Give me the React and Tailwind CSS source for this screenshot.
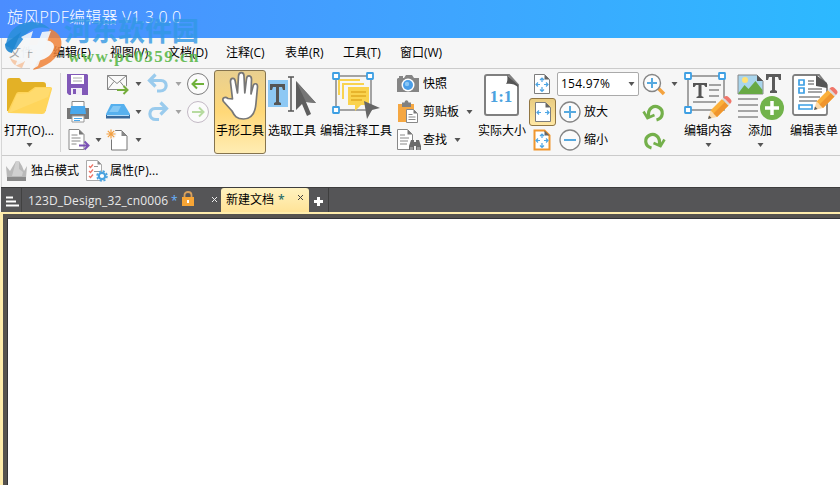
function Caret({ className = '', light = false }) {
  return (
    <svg width="7" height="4" viewBox="0 0 7 4" className={`shrink-0 ${className}`}>
      <path d="M0.5 0h6L3.5 4z" fill={light ? '#a3a3a3' : '#555555'} />
    </svg>
  );
}

function Icon({ children, className = '' }) {
  return (
    <svg width="24" height="24" viewBox="0 0 24 24" fill="none" className={`shrink-0 ${className}`}>
      {children}
    </svg>
  );
}

function BigIcon({ children, width = 52 }) {
  return (
    <svg width={width} height="51" viewBox={`0 0 ${width} 51`} fill="none" className="shrink-0">
      {children}
    </svg>
  );
}

// Shared pieces of the ribbon drawings
function Pencil({ x, y }) {
  return (
    <g transform={`translate(${x} ${y})`}>
      <path d="M0 23 2.5 14.500 9 21z" fill="#fbd9a8" />
      <path d="M0 23 1 19.500 3.500 22z" fill="#555" />
      <path d="M2.500 14.500 14 3l6.500 6.500L9 21z" fill="#fbb03b" />
      <path d="M5.500 17.500 17 6l3.500 3.500L9 21z" fill="#f0952d" />
      <path d="m14 3 1.500-1.500L22 8l-1.500 1.500z" fill="#d9d9d9" />
      <path d="M15.500 1.500C17.500-.5 19-.5 20.500 1l2 2c1.500 1.500 1.500 3-.5 5z" fill="#f0766a" />
    </g>
  );
}

function Handle({ x, y }) {
  return <rect x={x} y={y} width="6" height="6" rx="0.5" fill="#fff" stroke="#3d9fe3" strokeWidth="1.8" />;
}

function PageFit({ all = false, orange = false }) {
  return (
    <>
      <path
        d="M4.500 2.500h10l5 5v14h-15z"
        fill="#fff"
        stroke={orange ? '#f0962e' : '#7d7d7d'}
        strokeWidth={orange ? 2 : 1}
      />
      <path d="M14.500 2.500v5h5z" fill="#666" />
      <path d="M6 12.500h4M14 12.500h4M8 10.500l-2 2 2 2M16 10.500l2 2-2 2" stroke="#4da5e4" strokeWidth="1.200" />
      {all && (
        <path d="M12 6v4M12 15v4M10 8l2-2 2 2M10 17.500l2 2 2-2" stroke="#4da5e4" strokeWidth="1.200" />
      )}
    </>
  );
}

function Divider() {
  return <div className="mt-[3px] h-[79px] w-px bg-[#d3d3d3]" />;
}

function BigButton({ label, caret, width, children }) {
  return (
    <div className={`flex h-[84px] shrink-0 flex-col items-center ${width}`}>
      {children}
      <span className="h-[19px] text-xs leading-[19px] whitespace-nowrap">{label}</span>
      {caret && <Caret className="mt-[3px]" />}
    </div>
  );
}

function Row({ children, className = '' }) {
  return <div className={`flex h-7 items-center whitespace-nowrap ${className}`}>{children}</div>;
}

const menus = [
  { label: '文件', width: 'w-[44px]', color: 'text-[#a4a4a4]' },
  { label: '编辑(E)', width: 'w-[57px]' },
  { label: '视图(V)', width: 'w-[58px]' },
  { label: '文档(D)', width: 'w-[58px]' },
  { label: '注释(C)', width: 'w-[59px]' },
  { label: '表单(R)', width: 'w-[58px]' },
  { label: '工具(T)', width: 'w-[57px]' },
  { label: '窗口(W)', width: 'w-[60px]' },
];

function FileTools() {
  return (
    <>
      <div className="w-[42px]">
        <Row className="pl-[5px]">
          <Icon>
            <path d="M1 2h20l1 1v20H3l-2-2z" fill="#8159b8" />
            <path d="M5 3h13v9H5z" fill="#fff" />
            <path d="M7 6h9M7 9h9" stroke="#aaa" />
            <path d="M5 16h11v7H5z" fill="#f2eef7" />
            <path d="M7 17h3v5H7z" fill="#8159b8" />
          </Icon>
        </Row>
        <Row className="pl-[5px]">
          <Icon>
            <path d="M6 1.500h12v6H6z" fill="#fff" stroke="#888" />
            <path d="M1 8h22v11H1z" fill="#777" />
            <path d="M5 6h14l1 8H4z" fill="#4aa8ec" />
            <path d="M6 16h12v6H6z" fill="#fff" stroke="#999" />
            <path d="M8 18.500h8M8 20.500h6" stroke="#4aa8ec" />
          </Icon>
        </Row>
        <Row className="pl-[5px]">
          <Icon>
            <path d="M3 1.500h10l5 5v15H3z" fill="#fff" stroke="#888" />
            <path d="M13 1.500v5h5z" fill="#777" />
            <path d="M5.500 7h6M5.500 10h9M5.500 13h9M5.500 16h5" stroke="#888" />
            <path d="M13 17.500h9M18.500 13.500l4 4-4 4" stroke="#7b52b5" strokeWidth="2" />
          </Icon>
          <Caret className="ml-[5px]" />
        </Row>
      </div>
      <div className="w-[41px]">
        <Row className="pl-[3px]">
          <Icon>
            <path d="M1.500 3.500h19v14h-19z" fill="#fafafa" stroke="#858585" />
            <path d="m1.500 3.500 9.500 8 9.500-8M1.500 17.500 8 9.500M20.500 17.500 14 9.500" stroke="#858585" />
            <path d="M11 18h10M17.500 14l4 4-4 4" stroke="#f6f6f6" strokeWidth="4" />
            <path d="M11 18h10M17.500 14l4 4-4 4" stroke="#74ad3c" strokeWidth="2" />
          </Icon>
          <Caret className="ml-[5px]" />
        </Row>
        <Row className="pl-[3px]">
          <Icon>
            <path d="M5 4h13l6 10v2H0v-2z" fill="#56b0ee" />
            <path d="M7 6h8l-3 6H3z" fill="#84c8f5" />
            <path d="M0 15h24v3.500H0z" fill="#37699c" />
            <path d="M1 15h22v1H1z" fill="#b7ddf7" />
          </Icon>
          <Caret className="ml-[5px]" />
        </Row>
        <Row className="pl-[3px]">
          <Icon>
            <path d="M5.500 2.500h10l5.500 5.500v14H5.500z" fill="#fff" stroke="#777" />
            <path d="M15.500 2.500V8H21z" fill="#888" />
            <circle cx="5" cy="6" r="5.500" fill="#f6f6f6" />
            <path d="M5 1.500v9M.5 6h9M1.800 2.800l6.400 6.400M8.200 2.800 1.800 9.200" stroke="#f3a041" strokeWidth="1.200" />
          </Icon>
          <Caret className="ml-[5px]" />
        </Row>
      </div>
      <div className="w-[40px]">
        <Row className="pl-[2px]">
          <Icon>
            <path d="M3 8.500h12c7 0 7 10.500-1 10.500h-3M9.500 2.500l-6 6 6 6" stroke="#9acbed" strokeWidth="3.200" />
          </Icon>
          <Caret className="ml-[5px]" light />
        </Row>
        <Row className="pl-[2px]">
          <Icon>
            <path d="M20 8.500H9c-7 0-7 11 1 11h3M14.500 2.500l6 6-6 6" stroke="#9acbed" strokeWidth="3.200" />
          </Icon>
          <Caret className="ml-[5px]" light />
        </Row>
      </div>
      <div className="w-[29px]">
        <Row className="pl-[2px]">
          <Icon>
            <circle cx="12" cy="12" r="10.500" fill="#fbfbfb" stroke="#7c7c7c" />
            <path d="M6.500 12H18M11 7.500 6.500 12l4.500 4.500" stroke="#6fb13a" strokeWidth="2" />
          </Icon>
        </Row>
        <Row className="pl-[2px]">
          <Icon>
            <circle cx="12" cy="12" r="10.500" fill="#fbfbfb" stroke="#c3b9c5" />
            <path d="M6 12h11.500M13 7.500l4.500 4.500-4.500 4.500" stroke="#b7dba0" strokeWidth="2" />
          </Icon>
        </Row>
      </div>
    </>
  );
}

function ClipTools() {
  return (
    <div className="w-[82px] text-xs">
      <Row className="gap-[2px] pl-[3px]">
        <Icon>
          <path d="M1 6h6l2-3h6l2 3h5v14H0V7z" fill="#858585" />
          <path d="M2 4h4v2H2z" fill="#858585" />
          <circle cx="11" cy="13" r="6.500" fill="#fff" />
          <circle cx="11" cy="13" r="5" fill="#4a9ee8" />
          <circle cx="10" cy="12" r="2.200" fill="#8bc7f5" />
        </Icon>
        <span>快照</span>
      </Row>
      <Row className="gap-[2px] pl-[3px]">
        <Icon>
          <path d="M1 4h16v18H1z" fill="#f5a742" />
          <path d="M5 2.500h2.500c.5-3 3.500-3 4 0H14V7H5z" fill="#808080" />
          <path d="M9.500 9.500h7l4 4v9h-11z" fill="#fff" stroke="#888" />
          <path d="M16.500 9.500v4h4z" fill="#777" />
          <path d="M11.500 14.500h4M11.500 17h7M11.500 19.500h7" stroke="#888" />
        </Icon>
        <span>剪贴板</span>
        <Caret className="ml-[5px]" />
      </Row>
      <Row className="gap-[2px] pl-[3px]">
        <Icon>
          <path d="M.5 1.500h10l5 5v15H.5z" fill="#fff" stroke="#888" />
          <path d="M10.500 1.500v5h5z" fill="#777" />
          <path d="M3 7h5M3 10h9M3 13h8M3 16h7" stroke="#888" />
          <path d="M14 12h3v2h2v-2h3l2 6v4h-5v-4h-2v4h-5v-4z" fill="#6b6b6b" />
          <path d="M13 19h3v3h-3zM20 19h3v3h-3z" fill="#989898" />
        </Icon>
        <span>查找</span>
        <Caret className="ml-[5px]" />
      </Row>
    </div>
  );
}

function ZoomTools() {
  return (
    <>
      <div className="w-[28px]">
        <Row className="pl-px">
          <Icon>
            <PageFit all />
          </Icon>
        </Row>
        <div className="flex h-7 w-[27px] items-center justify-center rounded-[3px] border border-[#917643] bg-gradient-to-b from-[#e9cc80] to-[#ffe8a5]">
          <Icon>
            <PageFit />
          </Icon>
        </div>
        <Row className="pl-px">
          <Icon>
            <PageFit all orange />
          </Icon>
        </Row>
      </div>
      <div className="w-[84px] text-xs">
        <div className="flex h-7 items-center">
          <div className="flex h-[24px] w-[82px] items-center justify-between rounded-[2px] border border-[#aaa] bg-white pr-[3px] pl-[3px]">
            <span className="tracking-[0.25px]">154.97%</span>
            <Caret />
          </div>
        </div>
        <Row className="gap-[2px] pl-px">
          <Icon>
            <circle cx="12" cy="12" r="10" fill="#fbfbfb" stroke="#858585" strokeWidth="1.300" />
            <path d="M6 12h12M12 6v12" stroke="#56a9df" strokeWidth="2" />
          </Icon>
          <span>放大</span>
        </Row>
        <Row className="gap-[2px] pl-px">
          <Icon>
            <circle cx="12" cy="12" r="10" fill="#fbfbfb" stroke="#858585" strokeWidth="1.300" />
            <path d="M6 12h12" stroke="#56a9df" strokeWidth="2" />
          </Icon>
          <span>缩小</span>
        </Row>
      </div>
      <div className="w-[41px]">
        <Row className="pl-px">
          <Icon>
            <path d="m16 16 6 6" stroke="#f4a340" strokeWidth="3.500" />
            <circle cx="10" cy="11" r="8.500" fill="#fcfcfc" stroke="#858585" strokeWidth="1.400" />
            <path d="M5 11h10M10 6v10" stroke="#56a9df" strokeWidth="2" />
          </Icon>
          <Caret className="ml-[5px]" />
        </Row>
        <Row className="pl-px">
          <Icon>
            <path d="M14.500 20c7.500-2 7-10 2.500-12.500S5.500 7 6.500 17" stroke="#74b04b" strokeWidth="3.200" />
            <path d="M1.500 11.500 5.500 18l7-3" stroke="#74b04b" strokeWidth="2.600" />
          </Icon>
        </Row>
        <Row className="pl-px">
          <Icon>
            <path d="M9.500 20C2 18 2.500 10 7 7.500S18.500 7 17.500 17" stroke="#74b04b" strokeWidth="3.200" />
            <path d="M22.500 11.500 18.500 18l-7-3" stroke="#74b04b" strokeWidth="2.600" />
          </Icon>
        </Row>
      </div>
    </>
  );
}

function Ribbon() {
  return (
    <div className="flex h-[87px] shrink-0 border-b border-[#cbcbcb] pt-px">
      <BigButton label="打开(O)..." caret width="w-[58px] pr-1">
        <BigIcon>
          <path d="M4 11c0-2 1-3 3-3h9c2 0 2 4 4 4h20c2 0 3 1 3 3v26H4z" fill="#e3b126" />
          <path d="M6 43c-1 0-1.500-1-1-2l8-17c1-2 2-2 4-2h8l7-5h15c2 0 2 1 2 2l-6 21c-1 3-2 4-4 4z" fill="#ffd55b" />
          <path d="M6 43 14 24l12-1 7-5h15l-3 9z" fill="#ffe07c" opacity="0.6" />
        </BigIcon>
      </BigButton>
      <Divider />
      <FileTools />

      {/* selected tool */}
      <div className="ml-px h-[84px] w-[52px] rounded-[3px] border border-[#85744f] bg-gradient-to-b from-[#e8cf8f] via-[#ffd878] to-[#ffedb3]">
        <div className="-mt-px -ml-px">
          <BigButton label="手形工具" width="w-[52px]">
            <BigIcon>
              <path
                d="M18.500 29 16.500 12c-.3-4.500 4.300-5 4.800-.5L23.500 23 24.500 6c.3-4.500 5.500-4.500 5.500 0l.8 17L32.500 9c.5-4.500 5.100-4 5 .5L37 24l2-7.500c.8-4 4.700-3.500 4.500.5L42 33c-.8 11-5 16-12.500 16-7 0-9-3-11.500-8L9.500 31.500c-2-3.500 1.500-5.500 4.500-3z"
                fill="#fff"
                stroke="#777"
                strokeWidth="1.700"
                strokeLinejoin="round"
              />
            </BigIcon>
          </BigButton>
        </div>
      </div>
      <BigButton label="选取工具" width="w-[52px]">
        <BigIcon>
          <path d="M2 10h20v27H2z" fill="#8dc8f4" />
          <path d="M4 14h15v6h-2l-1-3h-3v15l2 1v2H8v-2l2-1V17H7l-1 3H4z" fill="#555" />
          <path d="M22 7h6M22 41h6M25 7v34" stroke="#555" strokeWidth="1.500" />
          <path d="m30 11 20 22-10-1 5 12-4 2-5-12-6 6z" fill="#5e5e5e" />
          <path d="m30 11 20 22-10-1z" fill="#767676" />
        </BigIcon>
      </BigButton>
      <BigButton label="编辑注释工具" width="w-[76px]">
        <BigIcon>
          <path d="M6 6h35v34H6z" stroke="#888" strokeWidth="1.500" />
          <path d="M9 25V10h21M13 29V14h21" stroke="#f9d34f" strokeWidth="2" />
          <path d="M18 17h21v18h-8l-6 6v-6h-7z" fill="#fad34e" />
          <path d="M21 22h15M21 26h15M21 30h11" stroke="#e1aa22" strokeWidth="1.500" />
          <Handle x="3" y="3" />
          <Handle x="37" y="3" />
          <Handle x="3" y="37" />
          <path d="m34 31 16 7-8 2-5 9z" fill="#666" />
        </BigIcon>
      </BigButton>
      <ClipTools />
      <BigButton label="实际大小" width="w-[52px]">
        <BigIcon>
          <path d="M11 5h22l9 10v28c0 1-1 2-2 2H11c-1 0-2-1-2-2V7c0-1 1-2 2-2z" fill="#fff" stroke="#808080" strokeWidth="2" />
          <path d="M31 5c1 4 0 8-1 9 4-1 9 0 12 3v-2z" fill="#555" />
          <text x="25" y="32" textAnchor="middle" fontSize="17" fill="#4ca2df" fontFamily="Liberation Serif, serif" fontWeight="bold">
            1:1
          </text>
        </BigIcon>
      </BigButton>
      <div className="w-px" />
      <ZoomTools />
      <BigButton label="编辑内容" caret width="w-[52px]">
        <BigIcon>
          <path d="M6 6h36v34H6z" stroke="#888" strokeWidth="1.500" />
          <path d="M11 13h14v4h-1.500L22 15h-2.500v11l2 1v1h-7v-1l2-1V15H14l-1.500 2H11z" fill="#555" />
          <path d="M27 15h12M27 20h10M27 26h10M11 32h23" stroke="#888" strokeWidth="1.600" />
          <Handle x="3" y="3" />
          <Handle x="37" y="3" />
          <Handle x="3" y="37" />
          <Pencil x="26" y="26" />
        </BigIcon>
      </BigButton>
      <BigButton label="添加" caret width="w-[52px]">
        <BigIcon>
          <path d="M4 5h19l6 6v13H4z" fill="#a9d5ec" stroke="#888" />
          <circle cx="11" cy="10" r="3" fill="#ffe174" />
          <path d="m4.500 23 6-8 4 4 7-8 7 9v4h-24z" fill="#68a944" />
          <path d="M23 5v6h6z" fill="#555" />
          <path d="M32 4h15v6h-2l-1-3h-3v13l2 1v2h-7v-2l2-1V7h-3l-1 3h-2z" fill="#5a5a5a" />
          <path d="M4 29h20M4 35h20M4 41h20M4 47h20" stroke="#8a8a8a" strokeWidth="1.700" />
          <circle cx="38" cy="38" r="12" fill="#72b34b" />
          <path d="M38 31v14M31 38h14" stroke="#fff" strokeWidth="3.500" />
        </BigIcon>
      </BigButton>
      <BigButton label="编辑表单" width="ml-[2px] w-[52px]">
        <BigIcon>
          <path d="M7 5h24l8 10v28c0 1-1 2-2 2H7c-1 0-2-1-2-2V7c0-1 1-2 2-2z" fill="#fff" stroke="#808080" strokeWidth="1.800" />
          <path d="M28 5v11l11 2v-5z" fill="#555" />
          <path d="M11 10h5v5h-5zM11 18h5v5h-5zM11 35h13v4H11z" fill="#fff" stroke="#3d9fe3" strokeWidth="1.700" />
          <path d="M20 11h6M20 14h6M20 19h14M20 22h14M11 27h21M11 31h18" stroke="#888" strokeWidth="1.400" />
          <Pencil x="26" y="17" />
        </BigIcon>
      </BigButton>
    </div>
  );
}

function TabBar() {
  return (
    <div className="flex h-[25px] shrink-0 items-end border-t border-[#3d3d3d] bg-[#555557] text-xs text-[#e7e7e7]">
      <div className="flex h-[24px] w-[21px] items-center justify-center border-r border-[#414141]">
        <svg width="13" height="12" viewBox="0 0 13 12" className="mt-[3px] ml-[2px]">
          <path d="M0 1.500h7M0 5.500h10M0 9.500h13" stroke="#fff" strokeWidth="2" />
        </svg>
      </div>
      <div className="flex h-[24px] w-[199px] items-center pt-px pl-[6px]">
        <span className="w-[143px] tracking-[0.13px] whitespace-nowrap">123D_Design_32_cn0006</span>
        <span className="w-[10px] text-[#69b4ff]">*</span>
        <svg width="14" height="16" viewBox="0 0 14 16" fill="none" className="mb-[3px]">
          <path d="M3.500 7V4c0-4 7-4 7 0v3" stroke="#d8a05c" strokeWidth="1.800" />
          <path d="M1 6h12v9H1z" fill="#f7a535" />
          <path d="M7 9v3" stroke="#fff" strokeWidth="2" />
        </svg>
        <svg width="7" height="7" viewBox="0 0 7 7" className="mb-[3px] ml-[16px]">
          <path d="m1 1 5 5M6 1 1 6" stroke="#eee" />
        </svg>
      </div>
      <div className="flex h-[24px] w-[88px] items-center rounded-t-[3px] bg-gradient-to-b from-[#fff2bf] to-[#ffe397] pl-[5px] text-black">
        <span className="w-[52px]">新建文档</span>
        <span className="w-[19px] font-semibold text-[#276c68]">*</span>
        <svg width="7" height="7" viewBox="0 0 7 7" className="mb-[5px]">
          <path d="m1 1 5 5M6 1 1 6" stroke="#444" />
        </svg>
      </div>
      <div className="flex h-[24px] w-[20px] items-center justify-center border-r border-[#3e3e3e]">
        <svg width="9" height="9" viewBox="0 0 9 9" className="mt-[2px]">
          <path d="M4.500 0v9M0 4.500h9" stroke="#fff" strokeWidth="3" />
        </svg>
      </div>
    </div>
  );
}

function Watermark() {
  return (
    <div className="pointer-events-none absolute top-[13px] left-[4px] h-[60px] w-[200px]">
      <svg width="60" height="52" viewBox="0 0 60 52" className="absolute top-[8px] left-0">
        <path d="M2 25C3 10 14 1 28 1c8 0 14 3 18 7-12-4-22 0-26 9l-9 12z" fill="#2c8fdc" opacity="0.9" />
        <path d="M1 23 17 11 8 32c-5-1-7-4-7-9z" fill="#1f86cf" opacity="0.9" />
        <path d="M46 8c9 3 13 10 11 18-3 12-15 20-28 23l5-9c9-2 15-7 16-14 0-4-3-6-8-7z" fill="#f08338" opacity="0.85" />
        <path d="M6 37c5 3 10 4 15 3l-3 7c-5-1-10-4-12-10z" fill="#f3954f" opacity="0.45" />
        <path
          d="m17 16 12-6-4 14h8l5-13 9-1-13 35-9 5 8-21h-8l-5 12-9 4 10-25z"
          fill="#f4f7fa"
          opacity="0.9"
        />
      </svg>
      <div className="absolute top-[2px] left-[60px] text-[27px] leading-[32px] font-bold whitespace-nowrap text-[#3298e4] opacity-80">
        河东软件园
      </div>
      <div className="absolute top-[34px] left-[64px] font-['Liberation_Serif',serif] text-[17px] leading-[20px] font-bold tracking-[1.5px] whitespace-nowrap text-[#5cb84c] opacity-90">
        www.pc0359.cn
      </div>
    </div>
  );
}

function App() {
  return (
    <div className="relative flex h-[485px] w-[840px] flex-col overflow-hidden bg-[#f6f6f6] font-['Open_Sans','Noto_Sans_CJK_SC',sans-serif] text-black">
      <div className="flex h-[38px] shrink-0 items-center bg-gradient-to-r from-[#4b8dff] to-[#2cb9ff] pl-[7px] text-[16px] font-light tracking-[0.25px] whitespace-nowrap text-white">
        <span className="-mt-[5px]">旋风PDF编辑器 V1.3.0.0</span>
      </div>

      <div className="ml-px flex h-[149px] shrink-0 flex-col border-l border-[#d6d6d6]">
        <div className="flex h-[31px] shrink-0 items-center border-b border-[#cbcbcb] pl-[7px] text-xs">
          {menus.map((menu) => (
            <span key={menu.label} className={`whitespace-nowrap ${menu.width} ${menu.color || ''}`}>
              {menu.label}
            </span>
          ))}
        </div>
        <Ribbon />
        <div className="flex h-[30px] items-center pl-[3px] text-xs">
          <Icon>
            <path d="M1 7 5 12l3-5 3-5h3l3 5 2 5 3-5-1 12H2z" fill="#b9b9b9" />
            <path d="M11 2h3v8l4 3-1 4H7z" fill="#d0d0d0" />
            <path d="M2 18h19v4H2z" fill="#898989" />
          </Icon>
          <span className="ml-[2px] w-[53px]">独占模式</span>
          <Icon>
            <path d="M2.500 1.500h11l4 4v16h-15z" fill="#fff" stroke="#aaa" />
            <path d="M13.500 1.500v4h4z" fill="#888" />
            <path d="m5 7 1.500 1.500L9 5.500M5 12l1.500 1.500L9 10.500M5 17l1.500 1.500L9 15.500" stroke="#ee7466" strokeWidth="1.300" />
            <path d="M10 7.500h4M10 12.500h5" stroke="#999" />
            <circle cx="18" cy="17" r="5" stroke="#4aa2df" strokeWidth="1.500" strokeDasharray="2.200 1.730" />
            <circle cx="18" cy="17" r="3.200" fill="#fff" stroke="#4aa2df" strokeWidth="2.200" />
          </Icon>
          <span className="ml-[2px] tracking-[0.1px]">属性(P)...</span>
        </div>
      </div>

      <div className="ml-px flex shrink-0 flex-col">
        <TabBar />
      </div>
      <div className="flex flex-1 border-t-2 border-l-[3px] border-[#ffedac] bg-[#56534f]">
        <div className="mt-1 ml-[4px] flex-1 border-t border-l border-[#343439] bg-white" />
      </div>
      <Watermark />
    </div>
  );
}

export default App;
